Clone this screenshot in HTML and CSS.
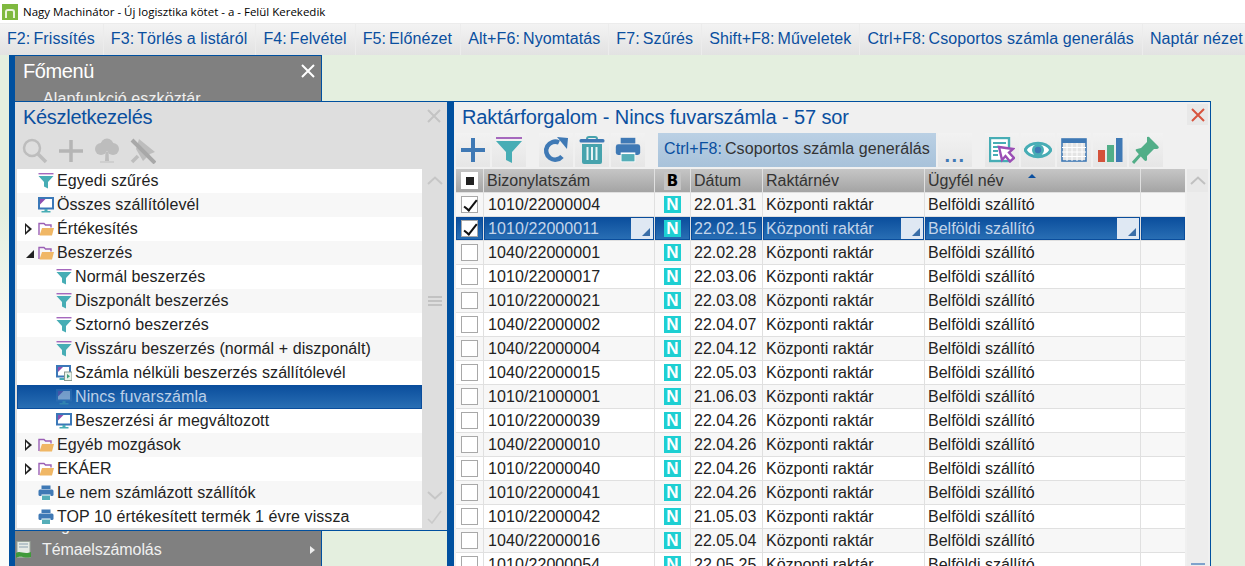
FILE: index.html
```html
<!DOCTYPE html>
<html lang="hu">
<head>
<meta charset="utf-8">
<title>Nagy Machinátor</title>
<link rel="stylesheet" href="styles.css">
</head>
<body>
<svg class="defs" width="0" height="0">
  <defs>
    <symbol id="i-funnel" viewBox="0 0 16 16">
      <rect x="0.5" y="0" width="15" height="1.4" fill="#a568bd"/>
      <path d="M0.5 3 H15.5 L10 9 V15.5 L6 13.5 V9 Z" fill="#47adb5"/>
    </symbol>
    <symbol id="i-monitor" viewBox="0 0 16 16">
      <rect x="1" y="1" width="14" height="10.5" fill="#fff" stroke="#3b78b8" stroke-width="2"/>
      <path d="M2 2 H7.5 L2 7.5 Z" fill="#8e4fb0"/>
      <rect x="6.5" y="12" width="3" height="2" fill="#47adb5"/>
      <rect x="3.5" y="14" width="9" height="1.5" fill="#47adb5"/>
    </symbol>
    <symbol id="i-monitor2" viewBox="0 0 16 16">
      <rect x="1" y="1" width="13" height="10.5" fill="#fff" stroke="#3b78b8" stroke-width="2"/>
      <path d="M2 2 H7 L2 7 Z" fill="#8e4fb0"/>
      <rect x="3.5" y="13" width="6" height="2" fill="#47adb5"/>
      <rect x="8.5" y="7" width="7.5" height="8.5" fill="#e8f2ea" stroke="#8a9a90"/>
      <path d="M11 9 L14 11.2 L11 13.5 Z" fill="#3f9f7a"/>
    </symbol>
    <symbol id="i-folder" viewBox="0 0 16 16">
      <path d="M1 14 V2.5 H6 L7.5 4 H13 V6.5" fill="none" stroke="#9a5fb5" stroke-width="1.4"/>
      <path d="M1.5 14.5 L4 7 H16 L14 14.5 Z" fill="#f0b765"/>
    </symbol>
    <symbol id="i-printer" viewBox="0 0 16 16">
      <rect x="3.5" y="0.5" width="9" height="3.5" fill="#3f79b5"/>
      <rect x="0.5" y="4.5" width="15" height="6.5" rx="1.5" fill="#3f79b5"/>
      <rect x="3.5" y="9.5" width="9" height="6" fill="#fff"/>
      <rect x="4" y="10.5" width="8" height="4.5" fill="#55aeb8"/>
    </symbol>
    <symbol id="i-grip" viewBox="0 0 14 12">
      <rect x="0" y="1" width="14" height="2" fill="currentColor"/>
      <rect x="0" y="5" width="14" height="2" fill="currentColor"/>
      <rect x="0" y="9" width="14" height="2" fill="currentColor"/>
    </symbol>
  </defs>
</svg>

<header class="titlebar">
  <div class="logo"><span class="logo-n"></span></div>
  <span class="app-title">Nagy Machinátor - Új logisztika kötet - a - Felül Kerekedik</span>
</header>

<nav class="menubar">
  <div class="mi"><span class="key">F2:</span>Frissítés</div>
  <div class="mi"><span class="key">F3:</span>Törlés a listáról</div>
  <div class="mi"><span class="key">F4:</span>Felvétel</div>
  <div class="mi"><span class="key">F5:</span>Előnézet</div>
  <div class="mi"><span class="key">Alt+F6:</span>Nyomtatás</div>
  <div class="mi"><span class="key">F7:</span>Szűrés</div>
  <div class="mi"><span class="key">Shift+F8:</span>Műveletek</div>
  <div class="mi"><span class="key">Ctrl+F8:</span>Csoportos számla generálás</div>
  <div class="mi">Naptár nézet</div>
</nav>

<main class="desktop">
  <div class="edge-strip"></div>

  <section class="win-main">
    <div class="main-head">
      <span class="main-title">Főmenü</span>
      <svg class="main-x" width="14" height="14" viewBox="0 0 14 14"><path d="M1 1 L13 13 M13 1 L1 13" stroke="#fff" stroke-width="2"/></svg>
    </div>
    <div class="main-item">Alapfunkció eszköztár</div>
    <div class="main-item main-push">Logisztika</div>
    <div class="main-item main-last">
      <svg class="main-ico" width="16" height="18" viewBox="0 0 16 18"><rect x="1" y="0.5" width="13" height="16" fill="#e6ebe6" stroke="#9aa59a"/><path d="M3 3 H12 M3 6 H12" stroke="#8aa0b0"/><path d="M0 12 C4 9 8 14 15 11 V16 C9 18 5 14 0 17 Z" fill="#3f9a3a"/></svg>
      <span>Témaelszámolás</span>
      <span class="main-arrow"></span>
    </div>
  </section>

  <section class="win-stock">
    <h2 class="stock-title">Készletkezelés</h2>
    <svg class="stock-x" width="14" height="14" viewBox="0 0 14 14"><path d="M1 1 L13 13 M13 1 L1 13" stroke="#c4c4c4" stroke-width="2"/></svg>
    <div class="stock-tools">
      <svg width="26" height="26" viewBox="0 0 26 26"><circle cx="10" cy="10" r="8" fill="none" stroke="#bdbdbd" stroke-width="2.5"/><path d="M16 16 L24 24" stroke="#bdbdbd" stroke-width="3.5"/></svg>
      <svg width="26" height="26" viewBox="0 0 26 26"><path d="M13 2 V24 M1 13 H25" stroke="#b5b5b5" stroke-width="3.5"/></svg>
      <svg width="26" height="26" viewBox="0 0 26 26"><circle cx="13" cy="7" r="6.5" fill="#bdbdbd"/><circle cx="7" cy="11" r="6" fill="#bdbdbd"/><circle cx="19" cy="11" r="6" fill="#bdbdbd"/><path d="M11.5 14 H14.5 L15 23 H11 Z" fill="#bdbdbd"/><rect x="6" y="23" width="14" height="2" fill="#cfcfcf"/></svg>
      <svg width="26" height="26" viewBox="0 0 26 26"><path d="M9 1 L25 14 L20 16 L13 23 L6 11 Z" fill="#bdbdbd"/><path d="M2 2 L25 25" stroke="#a8a8a8" stroke-width="4"/><path d="M8 18 L2 24" stroke="#bdbdbd" stroke-width="3.5"/></svg>
    </div>
    <div class="stock-body">
      <ul class="tree">
        <li class="node lv0"><svg class="ni"><use href="#i-funnel"/></svg><span>Egyedi szűrés</span></li>
        <li class="node lv0"><svg class="ni"><use href="#i-monitor"/></svg><span>Összes szállítólevél</span></li>
        <li class="node lv0"><i class="tw closed"></i><svg class="ni"><use href="#i-folder"/></svg><span>Értékesítés</span></li>
        <li class="node lv0"><i class="tw open"></i><svg class="ni"><use href="#i-folder"/></svg><span>Beszerzés</span></li>
        <li class="node lv1"><svg class="ni"><use href="#i-funnel"/></svg><span>Normál beszerzés</span></li>
        <li class="node lv1"><svg class="ni"><use href="#i-funnel"/></svg><span>Diszponált beszerzés</span></li>
        <li class="node lv1"><svg class="ni"><use href="#i-funnel"/></svg><span>Sztornó beszerzés</span></li>
        <li class="node lv1"><svg class="ni"><use href="#i-funnel"/></svg><span>Visszáru beszerzés (normál + diszponált)</span></li>
        <li class="node lv1"><svg class="ni"><use href="#i-monitor2"/></svg><span>Számla nélküli beszerzés szállítólevél</span></li>
        <li class="node lv1 sel"><svg class="ni dim"><use href="#i-monitor"/></svg><span>Nincs fuvarszámla</span></li>
        <li class="node lv1"><svg class="ni"><use href="#i-monitor"/></svg><span>Beszerzési ár megváltozott</span></li>
        <li class="node lv0"><i class="tw closed"></i><svg class="ni"><use href="#i-folder"/></svg><span>Egyéb mozgások</span></li>
        <li class="node lv0"><i class="tw closed"></i><svg class="ni"><use href="#i-folder"/></svg><span>EKÁER</span></li>
        <li class="node lv0"><svg class="ni"><use href="#i-printer"/></svg><span>Le nem számlázott szállítók</span></li>
        <li class="node lv0"><svg class="ni"><use href="#i-printer"/></svg><span>TOP 10 értékesített termék 1 évre vissza</span></li>
      </ul>
      <div class="stock-scroll">
        <svg class="ss-up" width="16" height="9" viewBox="0 0 16 9"><path d="M1 8 L8 1.5 L15 8" fill="none" stroke="#c6c6c6" stroke-width="2"/></svg>
        <svg class="ss-grip" width="14" height="12"><use href="#i-grip"/></svg>
        <svg class="ss-down" width="16" height="9" viewBox="0 0 16 9"><path d="M1 1 L8 7.5 L15 1" fill="none" stroke="#c6c6c6" stroke-width="2"/></svg>
        <svg class="ss-check" width="16" height="14" viewBox="0 0 16 14"><path d="M1 9 L5 13 L14 1" fill="none" stroke="#cacaca" stroke-width="1.6"/></svg>
      </div>
    </div>
  </section>

  <section class="win-list">
    <div class="list-head">
      <h2 class="list-title">Raktárforgalom - Nincs fuvarszámla - 57 sor</h2>
      <div class="list-close"><svg width="14" height="14" viewBox="0 0 14 14"><path d="M1 1 L13 13 M13 1 L1 13" stroke="#d8543e" stroke-width="2"/></svg></div>
    </div>
    <div class="toolbar">
      <div class="tb"><svg width="26" height="26" viewBox="0 0 26 26"><path d="M13 1 V25 M1 13 H25" stroke="#3f79b5" stroke-width="4"/></svg></div>
      <div class="tb"><svg width="26" height="26" viewBox="0 0 26 26"><rect x="0" y="0" width="26" height="2" fill="#a568bd"/><path d="M0 4 H26 L16 15 V26 L10 23 V15 Z" fill="#47adb5"/></svg></div>
      <div class="tb tb-gap"><svg width="26" height="26" viewBox="0 0 26 26"><path d="M19 19.5 A9 9 0 1 1 16 5.5" fill="none" stroke="#3f79b5" stroke-width="4.5"/><path d="M14 0 L25 1 L24 12 Z" fill="#3f79b5"/></svg></div>
      <div class="tb"><svg width="26" height="28" viewBox="0 0 26 28"><path d="M8 3 Q8 1 10 1 H16 Q18 1 18 3" fill="none" stroke="#47a3ad" stroke-width="2"/><rect x="0.5" y="3" width="25" height="3.5" rx="1.5" fill="#3f79b5"/><path d="M3 8 H23 V26 Q23 28 21 28 H5 Q3 28 3 26 Z" fill="#47a3ad"/><path d="M8.5 11 V24 M13 11 V24 M17.5 11 V24" stroke="#e8f3f4" stroke-width="2"/></svg></div>
      <div class="tb"><svg width="26" height="26"><use href="#i-printer"/></svg></div>
      <div class="tb-text"><span class="key">Ctrl+F8:</span>Csoportos számla generálás</div>
      <div class="tb tb-more">...</div>
      <div class="tb tb-gap"><svg width="26" height="26" viewBox="0 0 26 26"><rect x="1" y="1" width="19" height="23" fill="#fff" stroke="#47adb5" stroke-width="2.4"/><path d="M4 6 H17 M4 10 H9 M4 14 H9 M4 18 H9" stroke="#47adb5" stroke-width="2"/><path d="M10 10 L24 12 L20 15.5 L25 21 L21 24.5 L16.5 19 L13 23 Z" fill="#fff" stroke="#9b4fb5" stroke-width="2.4"/></svg></div>
      <div class="tb"><svg width="28" height="20" viewBox="0 0 28 20"><path d="M1 10 C6 1 22 1 27 10 C22 19 6 19 1 10 Z" fill="#fff" stroke="#47adb5" stroke-width="3"/><circle cx="14" cy="10" r="6" fill="#47adb5"/><circle cx="14" cy="10" r="3.2" fill="#3f79b5"/></svg></div>
      <div class="tb"><svg width="26" height="24" viewBox="0 0 26 24"><rect x="1" y="1" width="24" height="22" fill="#e4e4e4" stroke="#3f79b5" stroke-width="1.6"/><rect x="1" y="1" width="24" height="4" fill="#3f79b5"/><path d="M6 5 V23 M11 5 V23 M16 5 V23 M21 5 V23 M1 9.5 H25 M1 14 H25 M1 18.5 H25" stroke="#fff" stroke-width="1"/></svg></div>
      <div class="tb"><svg width="26" height="26" viewBox="0 0 26 26"><rect x="1" y="13" width="7" height="12" fill="#d4523a"/><rect x="10" y="8" width="7" height="17" fill="#52ae88"/><rect x="19" y="1" width="6.5" height="24" fill="#3f79b5"/></svg></div>
      <div class="tb"><svg width="28" height="28" viewBox="0 0 28 28"><path d="M15 1 Q17 0 18 2 L26 10 Q28 12 25 13 L22 13 L15 20 L15 24 Q14 26 12 24 L4 15 Q3 13 5 13 L9 12 L15 6 Z" fill="#52ae88"/><path d="M9 18 L1 27" stroke="#52ae88" stroke-width="3"/></svg></div>
    </div>

    <div class="list-body">
      <div class="grid">
        <div class="r hdr">
          <div class="c c-chk"><span class="hdr-box"><span class="hdr-dot"></span></span></div>
          <div class="c">Bizonylatszám</div>
          <div class="c c-b"><span class="b-box">B</span></div>
          <div class="c">Dátum</div>
          <div class="c">Raktárnév</div>
          <div class="c c-sort">Ügyfél név<i class="sort"></i></div>
          <div class="c"></div>
        </div>
        <div class="r odd"><div class="c c-chk"><span class="cb on"></span></div><div class="c num">1010/22000004</div><div class="c c-b"><span class="n">N</span></div><div class="c">22.01.31</div><div class="c">Központi raktár</div><div class="c">Belföldi szállító</div><div class="c"></div></div>
        <div class="r sel"><div class="c c-chk"><span class="cb on"></span></div><div class="c num">1010/22000011<i class="drop"></i></div><div class="c c-b"><span class="n">N</span></div><div class="c">22.02.15</div><div class="c">Központi raktár<i class="drop"></i></div><div class="c">Belföldi szállító<i class="drop"></i></div><div class="c"></div></div>
        <div class="r odd"><div class="c c-chk"><span class="cb"></span></div><div class="c num">1040/22000001</div><div class="c c-b"><span class="n">N</span></div><div class="c">22.02.28</div><div class="c">Központi raktár</div><div class="c">Belföldi szállító</div><div class="c"></div></div>
        <div class="r"><div class="c c-chk"><span class="cb"></span></div><div class="c num">1010/22000017</div><div class="c c-b"><span class="n">N</span></div><div class="c">22.03.06</div><div class="c">Központi raktár</div><div class="c">Belföldi szállító</div><div class="c"></div></div>
        <div class="r odd"><div class="c c-chk"><span class="cb"></span></div><div class="c num">1010/22000021</div><div class="c c-b"><span class="n">N</span></div><div class="c">22.03.08</div><div class="c">Központi raktár</div><div class="c">Belföldi szállító</div><div class="c"></div></div>
        <div class="r"><div class="c c-chk"><span class="cb"></span></div><div class="c num">1040/22000002</div><div class="c c-b"><span class="n">N</span></div><div class="c">22.04.07</div><div class="c">Központi raktár</div><div class="c">Belföldi szállító</div><div class="c"></div></div>
        <div class="r odd"><div class="c c-chk"><span class="cb"></span></div><div class="c num">1040/22000004</div><div class="c c-b"><span class="n">N</span></div><div class="c">22.04.12</div><div class="c">Központi raktár</div><div class="c">Belföldi szállító</div><div class="c"></div></div>
        <div class="r"><div class="c c-chk"><span class="cb"></span></div><div class="c num">1040/22000015</div><div class="c c-b"><span class="n">N</span></div><div class="c">22.05.03</div><div class="c">Központi raktár</div><div class="c">Belföldi szállító</div><div class="c"></div></div>
        <div class="r odd"><div class="c c-chk"><span class="cb"></span></div><div class="c num">1010/21000001</div><div class="c c-b"><span class="n">N</span></div><div class="c">21.06.03</div><div class="c">Központi raktár</div><div class="c">Belföldi szállító</div><div class="c"></div></div>
        <div class="r"><div class="c c-chk"><span class="cb"></span></div><div class="c num">1010/22000039</div><div class="c c-b"><span class="n">N</span></div><div class="c">22.04.26</div><div class="c">Központi raktár</div><div class="c">Belföldi szállító</div><div class="c"></div></div>
        <div class="r odd"><div class="c c-chk"><span class="cb"></span></div><div class="c num">1040/22000010</div><div class="c c-b"><span class="n">N</span></div><div class="c">22.04.26</div><div class="c">Központi raktár</div><div class="c">Belföldi szállító</div><div class="c"></div></div>
        <div class="r"><div class="c c-chk"><span class="cb"></span></div><div class="c num">1010/22000040</div><div class="c c-b"><span class="n">N</span></div><div class="c">22.04.26</div><div class="c">Központi raktár</div><div class="c">Belföldi szállító</div><div class="c"></div></div>
        <div class="r odd"><div class="c c-chk"><span class="cb"></span></div><div class="c num">1010/22000041</div><div class="c c-b"><span class="n">N</span></div><div class="c">22.04.26</div><div class="c">Központi raktár</div><div class="c">Belföldi szállító</div><div class="c"></div></div>
        <div class="r"><div class="c c-chk"><span class="cb"></span></div><div class="c num">1010/22000042</div><div class="c c-b"><span class="n">N</span></div><div class="c">21.05.03</div><div class="c">Központi raktár</div><div class="c">Belföldi szállító</div><div class="c"></div></div>
        <div class="r odd"><div class="c c-chk"><span class="cb"></span></div><div class="c num">1040/22000016</div><div class="c c-b"><span class="n">N</span></div><div class="c">22.05.04</div><div class="c">Központi raktár</div><div class="c">Belföldi szállító</div><div class="c"></div></div>
        <div class="r"><div class="c c-chk"><span class="cb"></span></div><div class="c num">1010/22000054</div><div class="c c-b"><span class="n">N</span></div><div class="c">22.05.25</div><div class="c">Központi raktár</div><div class="c">Belföldi szállító</div><div class="c"></div></div>
      </div>
      <div class="list-scroll">
        <div class="ls-top"><svg width="16" height="9" viewBox="0 0 16 9"><path d="M1 8 L8 1.5 L15 8" fill="none" stroke="#c0c0c0" stroke-width="2"/></svg></div>
        <svg class="ls-grip" width="14" height="12"><use href="#i-grip"/></svg>
      </div>
    </div>
  </section>
</main>
</body>
</html>
```
FILE: styles.css
```css
* { box-sizing: border-box; }
html, body { margin: 0; padding: 0; height: 100%; }
body {
  width: 1245px;
  height: 566px;
  overflow: hidden;
  display: flex;
  flex-direction: column;
  font-family: "Liberation Sans", Arial, sans-serif;
  font-size: 16px;
  color: #222;
  background: #fff;
}
.defs { position: absolute; }

/* title bar */
.titlebar { height: 23px; flex: none; display: flex; align-items: center; padding-left: 2px; gap: 5px; background: #fff; }
.logo { width: 16px; height: 16px; background: #7fb93f; display: flex; align-items: flex-end; justify-content: center; padding-bottom: 2px; }
.logo-n { display: block; width: 10px; height: 9px; border: 2.5px solid #eaf3dc; border-bottom: 0; border-radius: 3px 3px 0 0; }
.app-title { font-family: "Open Sans", "Noto Sans", sans-serif; font-size: 11.5px; color: #000; }

/* menu bar */
.menubar { height: 32px; flex: none; display: flex; background: linear-gradient(#f3f3f3, #e2e2e2); border-top: 1px solid #ececec; }
.mi { padding: 0 8px 0 7px; line-height: 29px; color: #0a4f9f; letter-spacing: 0.1px; white-space: nowrap; border-right: 1px solid #ececec; }
.key { margin-right: 3px; }

/* desktop */
.desktop { flex: 1; position: relative; overflow: hidden; background: #e4efdf; }
.edge-strip { position: absolute; left: 0; top: 0; bottom: 0; width: 9px; background: linear-gradient(#e4efdf 30%, #fbfcfa 60%); }

/* main menu window */
.win-main { position: absolute; left: 9px; top: 0; bottom: 0; width: 313px; display: flex; flex-direction: column; background: #808080; border-left: 6px solid #00509f; border-right: 1px solid #00509f; border-top: 1px solid #00509f; color: #f0f0f0; }
.main-head { height: 30px; display: flex; align-items: center; justify-content: space-between; padding: 0 6px 0 8px; flex: none; }
.main-title { font-size: 20px; letter-spacing: -0.4px; color: #fff; line-height: 30px; }
.main-item { height: 24px; line-height: 24px; padding-left: 28px; flex: none; margin-top: 0; position: relative; letter-spacing: 0.1px; }
.win-main .main-item:nth-child(2) { margin-top: 1px; }
.main-push { margin-top: auto; }
.main-last { display: flex; align-items: center; padding: 0 6px 0 1px; margin-bottom: 4px; height: 24px; letter-spacing: -0.1px; }
.main-ico { flex: none; margin-right: 10px; }
.main-arrow { margin-left: auto; margin-right: 0; width: 0; height: 0; border-left: 5px solid #eee; border-top: 4px solid transparent; border-bottom: 4px solid transparent; }

/* stock window */
.win-stock { position: absolute; left: 15px; top: 46px; width: 439px; height: 430px; display: flex; flex-direction: column; background: #dedede; border-top: 1px solid #00509f; border-bottom: 1px solid #00509f; border-right: 7px solid #00509f; }
.stock-title { margin: 0; font-weight: normal; font-size: 20px; letter-spacing: -0.3px; line-height: 30px; color: #0a4f9f; padding-left: 8px; height: 31px; flex: none; }
.stock-x { position: absolute; top: 7px; right: 6px; }
.stock-tools { height: 36px; display: flex; gap: 10px; padding: 5px 0 0 7px; flex: none; }
.stock-body { display: flex; flex: 1; min-height: 0; padding-left: 2px; }
.tree { list-style: none; margin: 0; padding: 0; width: 405px; flex: none; height: 359px; overflow: hidden; background: #fff; }
.node { height: 24px; position: relative; display: flex; align-items: center; white-space: nowrap; color: #222; letter-spacing: 0.08px; background: #fff; }
.node:nth-child(even) { background: #f7f7f7; }
.lv0 { padding-left: 21px; }
.lv1 { padding-left: 39px; }
.ni { width: 16px; height: 16px; margin-right: 3px; flex: none; }
.node.sel { background: linear-gradient(#0a4d9c, #2a70b5); color: #bcd0e8; outline: 1px solid #0a4d9c; outline-offset: -1px; }
.dim { opacity: 0.4; }
.tw { position: absolute; display: block; width: 0; height: 0; }
.tw.closed { left: 8px; top: 6px; border-left: 7px solid #222; border-top: 6px solid transparent; border-bottom: 6px solid transparent; }
.tw.closed::after { content: ""; position: absolute; left: -6px; top: -3px; border-left: 3.5px solid #fff; border-top: 3px solid transparent; border-bottom: 3px solid transparent; }
.tw.open { left: 9px; top: 9px; border-left: 8px solid transparent; border-bottom: 8px solid #222; }
.stock-scroll { flex: 1; display: flex; flex-direction: column; align-items: center; color: #c2c2c2; }
.ss-up { margin-top: 7px; flex: none; }
.ss-grip { margin-top: 110px; flex: none; }
.ss-down { margin-top: 184px; flex: none; }
.ss-check { margin-top: 10px; flex: none; }

/* list window */
.win-list { position: absolute; left: 447px; top: 46px; width: 764px; bottom: 0; display: flex; flex-direction: column; overflow: hidden; background: #f0f0f0; border-top: 1px solid #00509f; border-left: 7px solid #00509f; border-right: 1px solid #00509f; }
.list-head { height: 31px; flex: none; display: flex; align-items: flex-start; justify-content: space-between; padding: 2px 2px 0 8px; }
.list-title { margin: 0; font-weight: normal; font-size: 20px; letter-spacing: -0.1px; line-height: 27px; color: #0a4f9f; }
.list-close { width: 21px; height: 21px; display: flex; align-items: center; justify-content: center; background: #e8e8e8; }
.toolbar { height: 34px; flex: none; display: flex; gap: 2px; padding-left: 2px; }
.tb { width: 34px; height: 34px; flex: none; display: flex; align-items: center; justify-content: center; background: linear-gradient(#f2f2f2, #e6e6e6); }
.tb-gap { margin-left: 11px; }
.tb-text { width: 278px; flex: none; margin-left: 11px; height: 34px; line-height: 31px; padding-left: 6px; white-space: nowrap; letter-spacing: 0.08px; color: #333; background: linear-gradient(#bad0e4, #a8c2da); }
.tb-text .key { color: #0a4f9f; }
.tb-more { align-items: flex-end; color: #3f79b5; font-size: 20px; font-weight: bold; letter-spacing: 1.5px; line-height: 24px; }
.list-body { flex: 1; min-height: 0; display: flex; gap: 2px; padding: 2px 0 0 2px; overflow: hidden; }
.grid { width: 729px; flex: none; display: flex; flex-direction: column; gap: 1px; background: #e0e0e0; }
.r { display: grid; grid-template-columns: 27px 170px 35px 71px 161px 215px 44px; column-gap: 1px; height: 23px; flex: none; }
.c { background: #fff; padding-left: 3px; line-height: 24px; white-space: nowrap; color: #222; position: relative; overflow: hidden; }
.c.num { padding-left: 4px; letter-spacing: 0.08px; }
.r.odd .c { background: #f7f7f7; }
.hdr .c { background: linear-gradient(#c6c6c6, #a4a4a4); color: #333; }
.c-chk, .c-b { padding-left: 0; display: flex; align-items: center; justify-content: center; }
.hdr-box { width: 17px; height: 17px; background: #fff; display: flex; align-items: center; justify-content: center; }
.hdr-dot { width: 8px; height: 8px; background: #222; }
.b-box { width: 17px; height: 18px; background: #c4c4c4; color: #000; font-family: "DejaVu Sans", sans-serif; font-weight: bold; font-size: 15px; line-height: 18px; text-align: center; }
.n { width: 17px; height: 17px; background: #1ecfd2; color: #fff; font-weight: bold; font-size: 17px; line-height: 17px; text-align: center; display: block; }
.cb { width: 17px; height: 17px; border: 1px solid #a8a8a8; background: #fff; position: relative; display: block; }
.cb.on::after { content: ""; position: absolute; left: 5px; top: 0; width: 5px; height: 12px; border-right: 2px solid #111; border-bottom: 2px solid #111; transform: rotate(38deg); }
.r.sel .c { background: linear-gradient(#0a4d9c, #2a70b5); color: #c4d5ea; box-shadow: inset 0 0 0 1px #0a4d9c; }
.drop { position: absolute; right: 1px; top: 1px; width: 22px; height: 21px; background: #dfe8f3; }
.drop::after { content: ""; position: absolute; right: 3px; bottom: 3px; border-left: 8px solid transparent; border-bottom: 8px solid #3a6ea8; }
.sort { position: absolute; left: 103px; top: 5px; border-left: 4px solid transparent; border-right: 4px solid transparent; border-bottom: 4px solid #0a4f9f; }
.list-scroll { width: 21px; flex: none; display: flex; flex-direction: column; align-items: center; color: #7fa3cc; background: #ededed; }
.ls-top { width: 21px; height: 23px; flex: none; display: flex; align-items: center; justify-content: center; background: #e8e8e8; }
.ls-grip { margin-top: 370px; flex: none; }
```
